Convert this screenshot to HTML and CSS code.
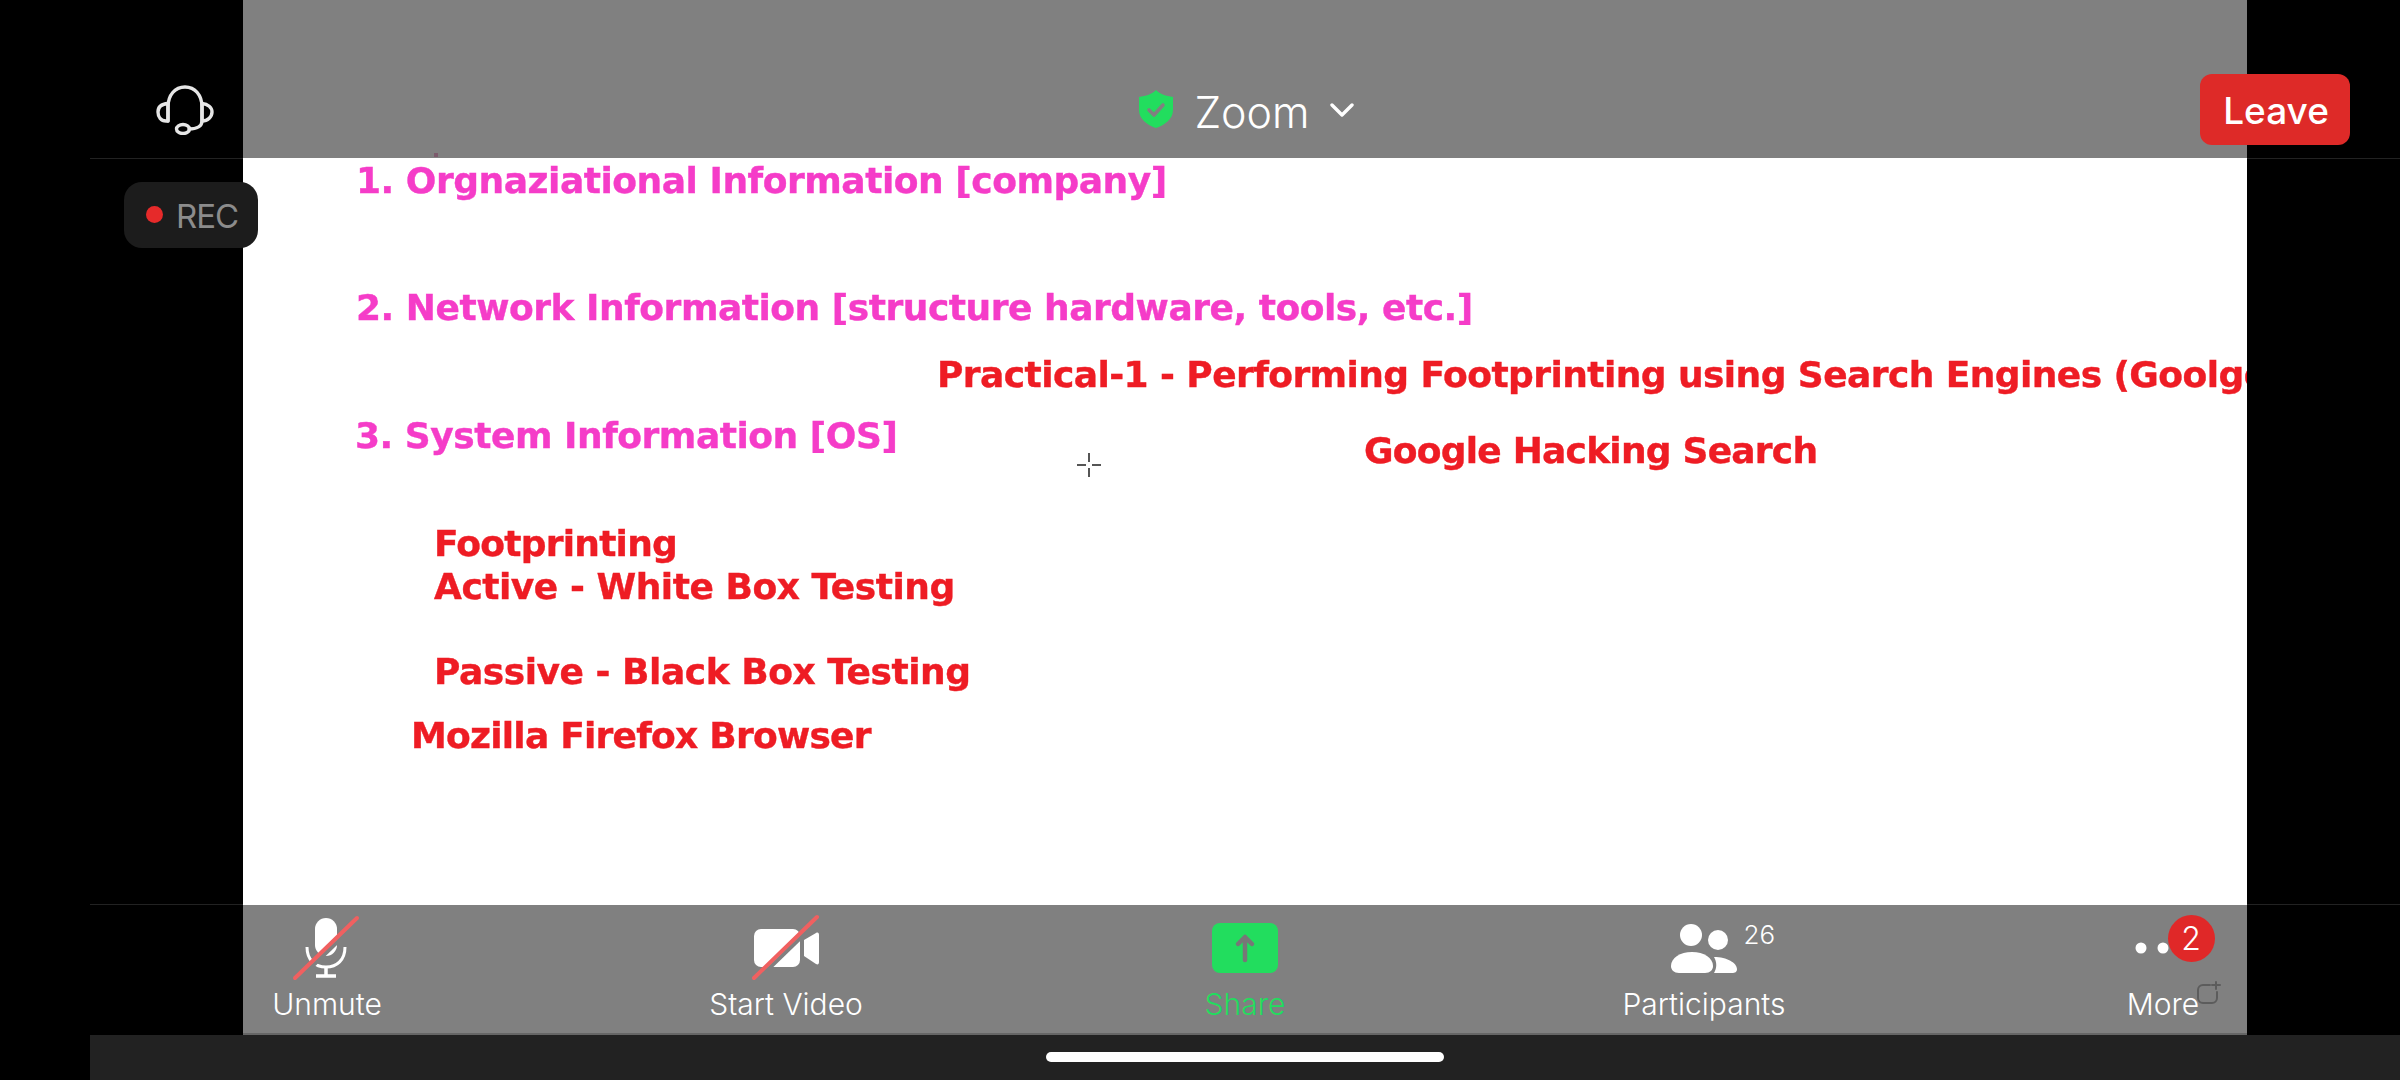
FILE: index.html
```html
<!DOCTYPE html>
<html lang="en">
<head>
  <meta charset="UTF-8" />
  <title>Zoom meeting</title>
  <link rel="stylesheet" href="styles.css">
</head>
<body>
  <div class="screen">
    <header class="topbar">
      <div class="topbar-left">
        <svg class="headset" viewBox="0 0 58 50" fill="none" stroke="#e6e6e6" stroke-width="3.400" stroke-linecap="round" stroke-linejoin="round">
          <path d="M12 36V22C12 10 19 2 29 2s17 8 17 20v14c0 5-5 8-13 8"/>
          <path d="M12 18.500C5 19 2 22 2 27s3 9 8 9h2z"/>
          <path d="M46 18.500c6 .5 10 4 10 8.500s-4 9-10 9z"/>
          <ellipse cx="27" cy="44" rx="6.500" ry="4.500"/>
        </svg>
      </div>
      <div class="title">
        <svg class="shield" viewBox="0 0 34 38">
          <path d="M17 0C21 4 27 6 34 7V20C34 29 26 35 17 38C8 35 0 29 0 20V7C7 6 13 4 17 0Z" fill="#22dd5e"/>
          <path d="M10 20l5 5 9-10" fill="none" stroke="#808080" stroke-width="3.600" stroke-linecap="round" stroke-linejoin="round"/>
        </svg>
        <span class="title-text">Zoom</span>
        <svg class="chevron" viewBox="0 0 24 14" fill="none" stroke="#fff" stroke-width="3.400" stroke-linecap="round" stroke-linejoin="round">
          <path d="M2 2l10 10L22 2"/>
        </svg>
      </div>
      <div class="topbar-right">
        <button class="leave">Leave</button>
      </div>
      <span class="speck"></span>
    </header>

    <section class="slide">
      <p class="line pink tight line-1">1. Orgnaziational Information [company]</p>
      <p class="line pink tight line-2">2. Network Information [structure hardware, tools, etc.]</p>
      <p class="line red line-3">Practical-1 - Performing Footprinting using Search Engines (Goolge</p>
      <p class="line pink tight line-4">3. System Information [OS]</p>
      <p class="line red tighter line-5">Google Hacking Search</p>
      <p class="line red tighter line-6">Footprinting</p>
      <p class="line red tight line-7">Active - White Box Testing</p>
      <p class="line red tight line-8">Passive - Black Box Testing</p>
      <p class="line red tighter line-9">Mozilla Firefox Browser</p>
      <svg class="cursor" viewBox="0 0 26 26" fill="none" stroke="#555" stroke-width="2">
        <path d="M13 1v9M13 16v9M1 13h9M16 13h9"/>
      </svg>
    </section>

    <nav class="toolbar">
      <div class="tool">
        <svg class="tool-icon" viewBox="0 0 100 70">
          <rect x="38" y="4" width="22" height="38" rx="11" fill="#fff"/>
          <path d="M30 33c0 13 8 20 19 20s19-7 19-20" fill="none" stroke="#fff" stroke-width="3"/>
          <path d="M49 53v9M39 62h20" fill="none" stroke="#fff" stroke-width="3.500"/>
          <path d="M22 65L84 5" stroke="#808080" stroke-width="4"/>
          <path d="M18 64L80 4" stroke="#f06060" stroke-width="4" stroke-linecap="round"/>
        </svg>
        <span class="tool-label">Unmute</span>
      </div>
      <div class="tool">
        <svg class="tool-icon" viewBox="0 0 100 70">
          <rect x="18" y="15" width="46" height="38" rx="7" fill="#fff"/>
          <path d="M68 26l12-7c2-1 3 0 3 2v27c0 2-1 3-3 2l-12-8z" fill="#fff"/>
          <path d="M22 65L85 4" stroke="#808080" stroke-width="4"/>
          <path d="M18 64L81 3" stroke="#f06060" stroke-width="4" stroke-linecap="round"/>
        </svg>
        <span class="tool-label">Start Video</span>
      </div>
      <div class="tool tool-share">
        <svg class="tool-icon" viewBox="0 0 100 70">
          <rect x="17" y="9" width="66" height="50" rx="8" fill="#22dd5e"/>
          <path d="M50 46V23M43 30l7-7 7 7" fill="none" stroke="#777" stroke-width="4.500" stroke-linecap="round" stroke-linejoin="round"/>
        </svg>
        <span class="tool-label">Share</span>
      </div>
      <div class="tool">
        <svg class="tool-icon" viewBox="0 0 100 70">
          <circle cx="37" cy="21" r="11" fill="#fff"/>
          <circle cx="64" cy="26" r="10" fill="#fff"/>
          <path d="M25 59c-5 0-8-3-8-7 0-8 9-14 21-14s21 6 21 14c0 4-3 7-8 7z" fill="#fff"/>
          <path d="M60 43c13 0 23 6 23 12 0 3-2 4-5 4H60c3-5 3-11 0-16z" fill="#fff"/>
        </svg>
        <span class="count">26</span>
        <span class="tool-label">Participants</span>
      </div>
      <div class="tool">
        <svg class="tool-icon" viewBox="0 0 100 70">
          <circle cx="28" cy="34" r="5.500" fill="#fff"/>
          <circle cx="50" cy="34" r="5.500" fill="#fff"/>
        </svg>
        <span class="badge">2</span>
        <span class="tool-label">More</span>
        <svg class="more-plus" viewBox="0 0 24 23" fill="none" stroke="#5c5c5c" stroke-width="2" stroke-linecap="round">
          <path d="M13 4H6a5 5 0 0 0-5 5v8a5 5 0 0 0 5 5h9a5 5 0 0 0 5-5v-6M19 1v7M15 4h8"/>
        </svg>
      </div>
    </nav>

    <footer class="gesture-bar"><span class="handle"></span></footer>
  </div>
  <div class="rec"><span class="rec-dot"></span>REC</div>
</body>
</html>
```
FILE: styles.css
```css
* {
  box-sizing: border-box;
}
html, body {
  margin: 0;
  height: 100%;
  overflow: hidden;
  background: #000;
}
body {
  position: relative;
  width: 2400px;
  height: 1080px;
  padding-left: 90px;
  font-family: "Inter", sans-serif;
  color: #fff;
}
.screen {
  display: flex;
  flex-direction: column;
  height: 100%;
}

/* top bar, spans the whole screen but only the video part is gray */
.topbar {
  position: relative;
  height: 158px;
  flex: none;
  display: grid;
  grid-template-columns: 1fr auto 1fr;
  background: linear-gradient(90deg, #000 153px, #808080 153px, #808080 2157px, #000 2157px);
  box-shadow: 0 1px 0 #222;
}
.topbar-left {
  padding: 85px 0 0 66px;
}
.headset {
  width: 58px;
  height: 50px;
}
.title {
  display: flex;
  align-items: flex-start;
  margin-left: 3px;
  padding-top: 90px;
}
.shield {
  width: 34px;
  height: 38px;
}
.title-text {
  font-size: 43px;
  font-weight: 350;
  line-height: 50px;
  margin: -3px 20px 0 21px;
}
.chevron {
  width: 24px;
  height: 14px;
  margin-top: 13px;
}
.topbar-right {
  display: flex;
  justify-content: flex-end;
  padding: 74px 50px 0 0;
}
.leave {
  width: 150px;
  height: 71px;
  padding: 2px 0 0 2px;
  border: 0;
  border-radius: 12px;
  background: #de2a28;
  color: #fff;
  font-family: "Inter", sans-serif;
  font-size: 37px;
  font-weight: 500;
}
.speck {
  position: absolute;
  left: 344px;
  top: 153px;
  width: 4px;
  height: 4px;
  background: #7c5a6c;
}

/* slide, text boxes are placed freely on it */
.slide {
  position: relative;
  height: 747px;
  flex: none;
  margin: 0 153px;
  background: #fff;
  overflow: hidden;
}
.line {
  position: absolute;
  margin: 0;
  font-family: "DejaVu Sans", sans-serif;
  font-weight: 700;
  font-size: 36px;
  line-height: 44px;
  white-space: nowrap;
  -webkit-text-stroke: 0.4px currentColor;
  filter: blur(0.4px);
}
.pink { color: #f53cc8; }
.red { color: #ee1c24; }
.tight { letter-spacing: -0.47px; }
.tighter { letter-spacing: -0.77px; }
.line-1 { left: 113px; top: 1px; }
.line-2 { left: 113px; top: 128px; }
.line-3 { left: 694px; top: 195px; letter-spacing: -0.57px; }
.line-4 { left: 112px; top: 256px; }
.line-5 { left: 1121px; top: 271px; }
.line-6 { left: 191px; top: 364px; }
.line-7 { left: 191px; top: 407px; }
.line-8 { left: 191px; top: 492px; }
.line-9 { left: 168px; top: 556px; }
.cursor {
  position: absolute;
  left: 833px;
  top: 294px;
  width: 26px;
  height: 26px;
}

/* bottom toolbar */
.toolbar {
  height: 130px;
  flex: none;
  display: flex;
  justify-content: center;
  background:
    linear-gradient(90deg, #000 153px, #666 153px, #666 2157px, #000 2157px) bottom / 100% 2px no-repeat,
    linear-gradient(90deg, #000 153px, #808080 153px, #808080 2157px, #000 2157px);
  box-shadow: 0 -1px 0 #222;
}
.tool {
  position: relative;
  width: 459px;
  display: flex;
  flex-direction: column;
  align-items: center;
  padding-top: 9px;
}
.tool-icon {
  width: 100px;
  height: 70px;
}
.tool-label {
  font-size: 30px;
  font-weight: 350;
  line-height: 36px;
  margin-top: 2px;
}
.tool-share .tool-label {
  color: #22dd5e;
}
.count {
  position: absolute;
  left: 269px;
  top: 15px;
  font-size: 26px;
  font-weight: 300;
  line-height: 30px;
}
.badge {
  position: absolute;
  left: 234px;
  top: 10px;
  width: 47px;
  height: 47px;
  border-radius: 50%;
  background: #e02828;
  font-size: 32px;
  font-weight: 300;
  line-height: 47px;
  text-align: center;
}
.more-plus {
  position: absolute;
  left: 263px;
  top: 76px;
  width: 24px;
  height: 23px;
}

/* android gesture bar */
.gesture-bar {
  height: 45px;
  flex: none;
  background: #222;
  display: flex;
  align-items: center;
  justify-content: center;
}
.handle {
  width: 398px;
  height: 10px;
  margin-top: -2px;
  border-radius: 5px;
  background: #fff;
}

/* recording pill hangs over the slide edge */
.rec {
  position: absolute;
  left: 124px;
  top: 182px;
  width: 134px;
  height: 66px;
  border-radius: 18px;
  background: #1c1c1c;
  color: #8c8c8c;
  font-size: 33px;
  letter-spacing: -1px;
  display: flex;
  align-items: center;
  padding: 2px 0 0 22px;
  gap: 13px;
}
.rec-dot {
  width: 17px;
  height: 17px;
  border-radius: 50%;
  background: #e62a2a;
  margin-top: -4px;
}
```
